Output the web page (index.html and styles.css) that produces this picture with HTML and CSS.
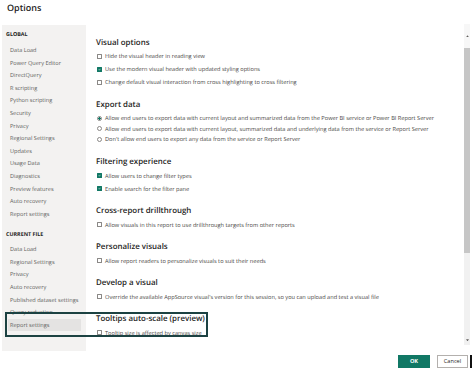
FILE: index.html
```html
<!DOCTYPE html>
<html lang="en">
<head>
    <meta charset="UTF-8">
    <meta name="viewport" content="width=device-width, initial-scale=1.0">
    <title>Options</title>
    <link rel="stylesheet" href="styles.css">
</head>
<body>
<div class="dialog">
    <h1 class="title">Options</h1>
    <div class="body">
        <nav class="sidebar">
            <div class="group-label">GLOBAL</div>
            <ul class="nav-list">
                <li>Data Load</li>
                <li>Power Query Editor</li>
                <li>DirectQuery</li>
                <li>R scripting</li>
                <li>Python scripting</li>
                <li>Security</li>
                <li>Privacy</li>
                <li>Regional Settings</li>
                <li>Updates</li>
                <li>Usage Data</li>
                <li>Diagnostics</li>
                <li>Preview features</li>
                <li>Auto recovery</li>
                <li>Report settings</li>
            </ul>
            <div class="group-label current">CURRENT FILE</div>
            <ul class="nav-list">
                <li>Data Load</li>
                <li>Regional Settings</li>
                <li>Privacy</li>
                <li>Auto recovery</li>
                <li>Published dataset settings</li>
                <li>Query reduction</li>
                <li class="active">Report settings</li>
            </ul>
        </nav>

        <main class="content">
            <section class="section">
                <h2>Visual options</h2>
                <div class="row"><span class="box"></span>Hide the visual header in reading view</div>
                <div class="row"><span class="box on"><svg viewBox="0 0 6 6"><path d="M1.2 3.1 2.5 4.3 4.8 1.7"/></svg></span>Use the modern visual header with updated styling options</div>
                <div class="row"><span class="box"></span>Change default visual interaction from cross highlighting to cross filtering</div>
            </section>

            <section class="section">
                <h2>Export data</h2>
                <div class="radios">
                    <div class="row"><span class="box radio on"></span>Allow end users to export data with current layout and summarized data from the Power BI service or Power BI Report Server</div>
                    <div class="row"><span class="box radio"></span>Allow end users to export data with current layout, summarized data and underlying data from the service or Report Server</div>
                    <div class="row"><span class="box radio"></span>Don't allow end users to export any data from the service or Report Server</div>
                </div>
            </section>

            <section class="section">
                <h2>Filtering experience</h2>
                <div class="row"><span class="box on"><svg viewBox="0 0 6 6"><path d="M1.2 3.1 2.5 4.3 4.8 1.7"/></svg></span>Allow users to change filter types</div>
                <div class="row"><span class="box on"><svg viewBox="0 0 6 6"><path d="M1.2 3.1 2.5 4.3 4.8 1.7"/></svg></span>Enable search for the filter pane</div>
            </section>

            <section class="section">
                <h2>Cross-report drillthrough</h2>
                <div class="row"><span class="box"></span>Allow visuals in this report to use drillthrough targets from other reports</div>
            </section>

            <section class="section">
                <h2>Personalize visuals</h2>
                <div class="row"><span class="box"></span>Allow report readers to personalize visuals to suit their needs</div>
            </section>

            <section class="section">
                <h2>Develop a visual</h2>
                <div class="row"><span class="box"></span>Override the available AppSource visual's version for this session, so you can upload and test a visual file</div>
            </section>

            <section class="section">
                <h2>Tooltips auto-scale (preview)</h2>
                <div class="row"><span class="box"></span>Tooltip size is affected by canvas size</div>
            </section>
        </main>

        <div class="scrollbar">
            <div class="scroll-cap"><svg viewBox="0 0 4 3"><path d="M0 3 2 0 4 3z"/></svg></div>
            <div class="scroll-thumb"></div>
            <div class="scroll-track"></div>
            <div class="scroll-end"><svg viewBox="0 0 4 3"><path d="M0 0 4 0 2 3z"/></svg></div>
        </div>
    </div>

    <footer class="actions">
        <button class="btn btn-primary">OK</button>
        <button class="btn btn-secondary">Cancel</button>
        <span class="cursor-bar"></span>
    </footer>

    <!-- highlight drawn over the screenshot -->
    <div class="callout"></div>
</div>
</body>
</html>
```

FILE: styles.css
```css
body {
    margin: 0;
    background: #fff;
    font-family: 'Open Sans', sans-serif;
    color: #3b3a39;
    text-rendering: geometricPrecision;
}
.dialog {
    position: relative;
    width: 474px;
    height: 373px;
    overflow: hidden;
}
.title {
    margin: 0;
    height: 25px;
    padding-left: 7px;
    font-size: 9px;
    font-weight: 600;
    line-height: 16px;
    color: #252423;
}
.body {
    display: flex;
    height: 326px;
}

/* left navigation */
.sidebar {
    flex: none;
    width: 80px;
    margin-left: 2px;
    padding-left: 4px;
    background: #f3f2f1;
}
.group-label {
    margin: 3px 0 4px;
    font-size: 5.4px;
    font-weight: 700;
    line-height: 12px;
    color: #252423;
}
.group-label.current {
    margin: 7.6px 0 3.3px;
}
.nav-list {
    list-style: none;
    margin: 0;
    padding: 0;
}
.nav-list li {
    height: 12.6px;
    margin: 0 5px 0 2px;
    padding-left: 2px;
    font-size: 5.6px;
    line-height: 12.6px;
    color: #605e5c;
    white-space: nowrap;
}
.nav-list li.active {
    background: #e4e3e2;
}

/* settings */
.content {
    flex: 1;
    min-width: 0;
    padding: 11.5px 0 0 10px;
}
.section + .section {
    margin-top: 10px;
}
.section h2 {
    margin: 0 0 1px;
    font-size: 7.9px;
    font-weight: 600;
    line-height: 12px;
    color: #252423;
}
.row {
    display: flex;
    align-items: center;
    gap: 3px;
    height: 13px;
    font-size: 5.65px;
    color: #484644;
    white-space: nowrap;
}
.radios {
    padding: 1.25px 0 1.75px;
}
.radios .row {
    height: 10.5px;
}
.box {
    flex: none;
    display: flex;
    width: 5px;
    height: 5px;
    margin-left: 1px;
    box-sizing: border-box;
    border: 0.75px solid #8a8886;
    border-radius: 0.5px;
    background: #fff;
}
.box.on {
    background: #117865;
    border-color: #117865;
}
.box svg {
    width: 100%;
    height: 100%;
    fill: none;
    stroke: #fff;
    stroke-width: 1;
}
.box.radio {
    border-radius: 50%;
}
.box.radio.on {
    border-color: #8a8886;
    background: radial-gradient(circle, #117865 0 1.1px, #fff 1.4px);
}

/* scrollbar */
.scrollbar {
    flex: none;
    display: flex;
    flex-direction: column;
    width: 6px;
    margin: -1px 4px 6px 0;
    background: #f1f1f1;
}
.scroll-cap {
    height: 24px;
    display: flex;
    align-items: center;
    justify-content: center;
    background: #f7f7f7;
}
.scroll-thumb {
    height: 205px;
    background: #c6c6c6;
}
.scroll-track {
    flex: 1;
}
.scroll-end {
    height: 10px;
    display: flex;
    align-items: center;
    justify-content: center;
}
.scrollbar svg {
    width: 3px;
    height: 2.5px;
    fill: #605e5c;
}

/* footer buttons */
.actions {
    display: flex;
    justify-content: flex-end;
    align-items: center;
    height: 14px;
    margin-top: 3px;
    padding-right: 2.5px;
}
.btn {
    height: 13px;
    padding: 0;
    font-family: inherit;
    font-size: 5.6px;
    border: none;
}
.btn-primary {
    width: 32px;
    background: #117865;
    color: #fff;
    font-weight: 700;
}
.btn-secondary {
    width: 31px;
    margin-left: 7px;
    box-sizing: border-box;
    border: 0.75px solid #b3b0ad;
    background: #fff;
    color: #252423;
}
.cursor-bar {
    width: 1.5px;
    height: 13px;
    margin-left: 2px;
    background: #111;
}

.callout {
    position: absolute;
    left: 5px;
    top: 312px;
    width: 203px;
    height: 25px;
    box-sizing: border-box;
    border: 2px solid #1c4242;
}
```
